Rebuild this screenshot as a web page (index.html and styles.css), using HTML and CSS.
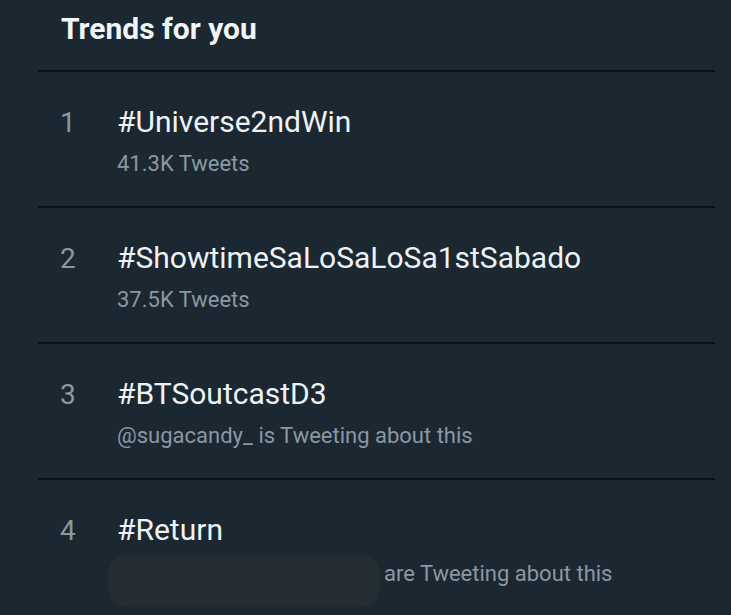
FILE: index.html
```html
<!DOCTYPE html>
<html>
<head>
<meta charset="utf-8">
<link rel="stylesheet" href="styles.css">
</head>
<body>
<div class="panel">
  <h2 class="title">Trends for you</h2>
  <div class="trend">
    <div class="rank">1</div>
    <div class="info">
      <div class="tag">#Universe2ndWin</div>
      <div class="meta">41.3K Tweets</div>
    </div>
  </div>
  <div class="trend">
    <div class="rank">2</div>
    <div class="info">
      <div class="tag">#ShowtimeSaLoSaLoSa1stSabado</div>
      <div class="meta">37.5K Tweets</div>
    </div>
  </div>
  <div class="trend">
    <div class="rank">3</div>
    <div class="info">
      <div class="tag">#BTSoutcastD3</div>
      <div class="meta">@sugacandy_ is Tweeting about this</div>
    </div>
  </div>
  <div class="trend last">
    <div class="rank">4</div>
    <div class="info">
      <div class="tag">#Return</div>
      <div class="meta redacted-row"><span class="redacted"></span><span class="after-redacted">are Tweeting about this</span></div>
    </div>
  </div>
</div>
</body>
</html>
```
FILE: styles.css
```css
html, body {
  margin: 0;
  padding: 0;
  background: #1b2832;
  font-family: Roboto, "Liberation Sans", sans-serif;
}
.panel {
  width: 731px;
  height: 615px;
  overflow: hidden;
}
.title {
  margin: 0 16px 0 38px;
  padding: 11px 0 0 23px;
  height: 72px;
  box-sizing: border-box;
  font-size: 30px;
  line-height: 36px;
  font-weight: 700;
  color: #f2f5f7;
  border-bottom: 2px solid #0a0f16;
}
.trend {
  display: flex;
  margin-left: 38px;
  margin-right: 16px;
  padding: 33px 0 0 0;
  height: 136px;
  box-sizing: border-box;
  border-bottom: 2px solid #0a0f16;
}
.trend.last {
  border-bottom: none;
}
.rank {
  width: 79px;
  padding-left: 22px;
  padding-top: 1px;
  box-sizing: border-box;
  font-size: 28px;
  line-height: 34px;
  color: #8a98a4;
}
.info {
  display: flex;
  flex-direction: column;
  gap: 12px;
}
.tag {
  font-size: 30px;
  line-height: 34px;
  color: #eef2f5;
}
.meta {
  font-size: 22px;
  line-height: 26px;
  color: #8a98a4;
}
.redacted-row {
  display: flex;
  align-items: flex-start;
}
.redacted {
  display: block;
  flex: none;
  width: 272px;
  height: 52px;
  margin: -4px 4px 0 -9px;
  border-radius: 18px;
  background: #232c31;
}
.after-redacted {
  padding-top: 2px;
}
```
